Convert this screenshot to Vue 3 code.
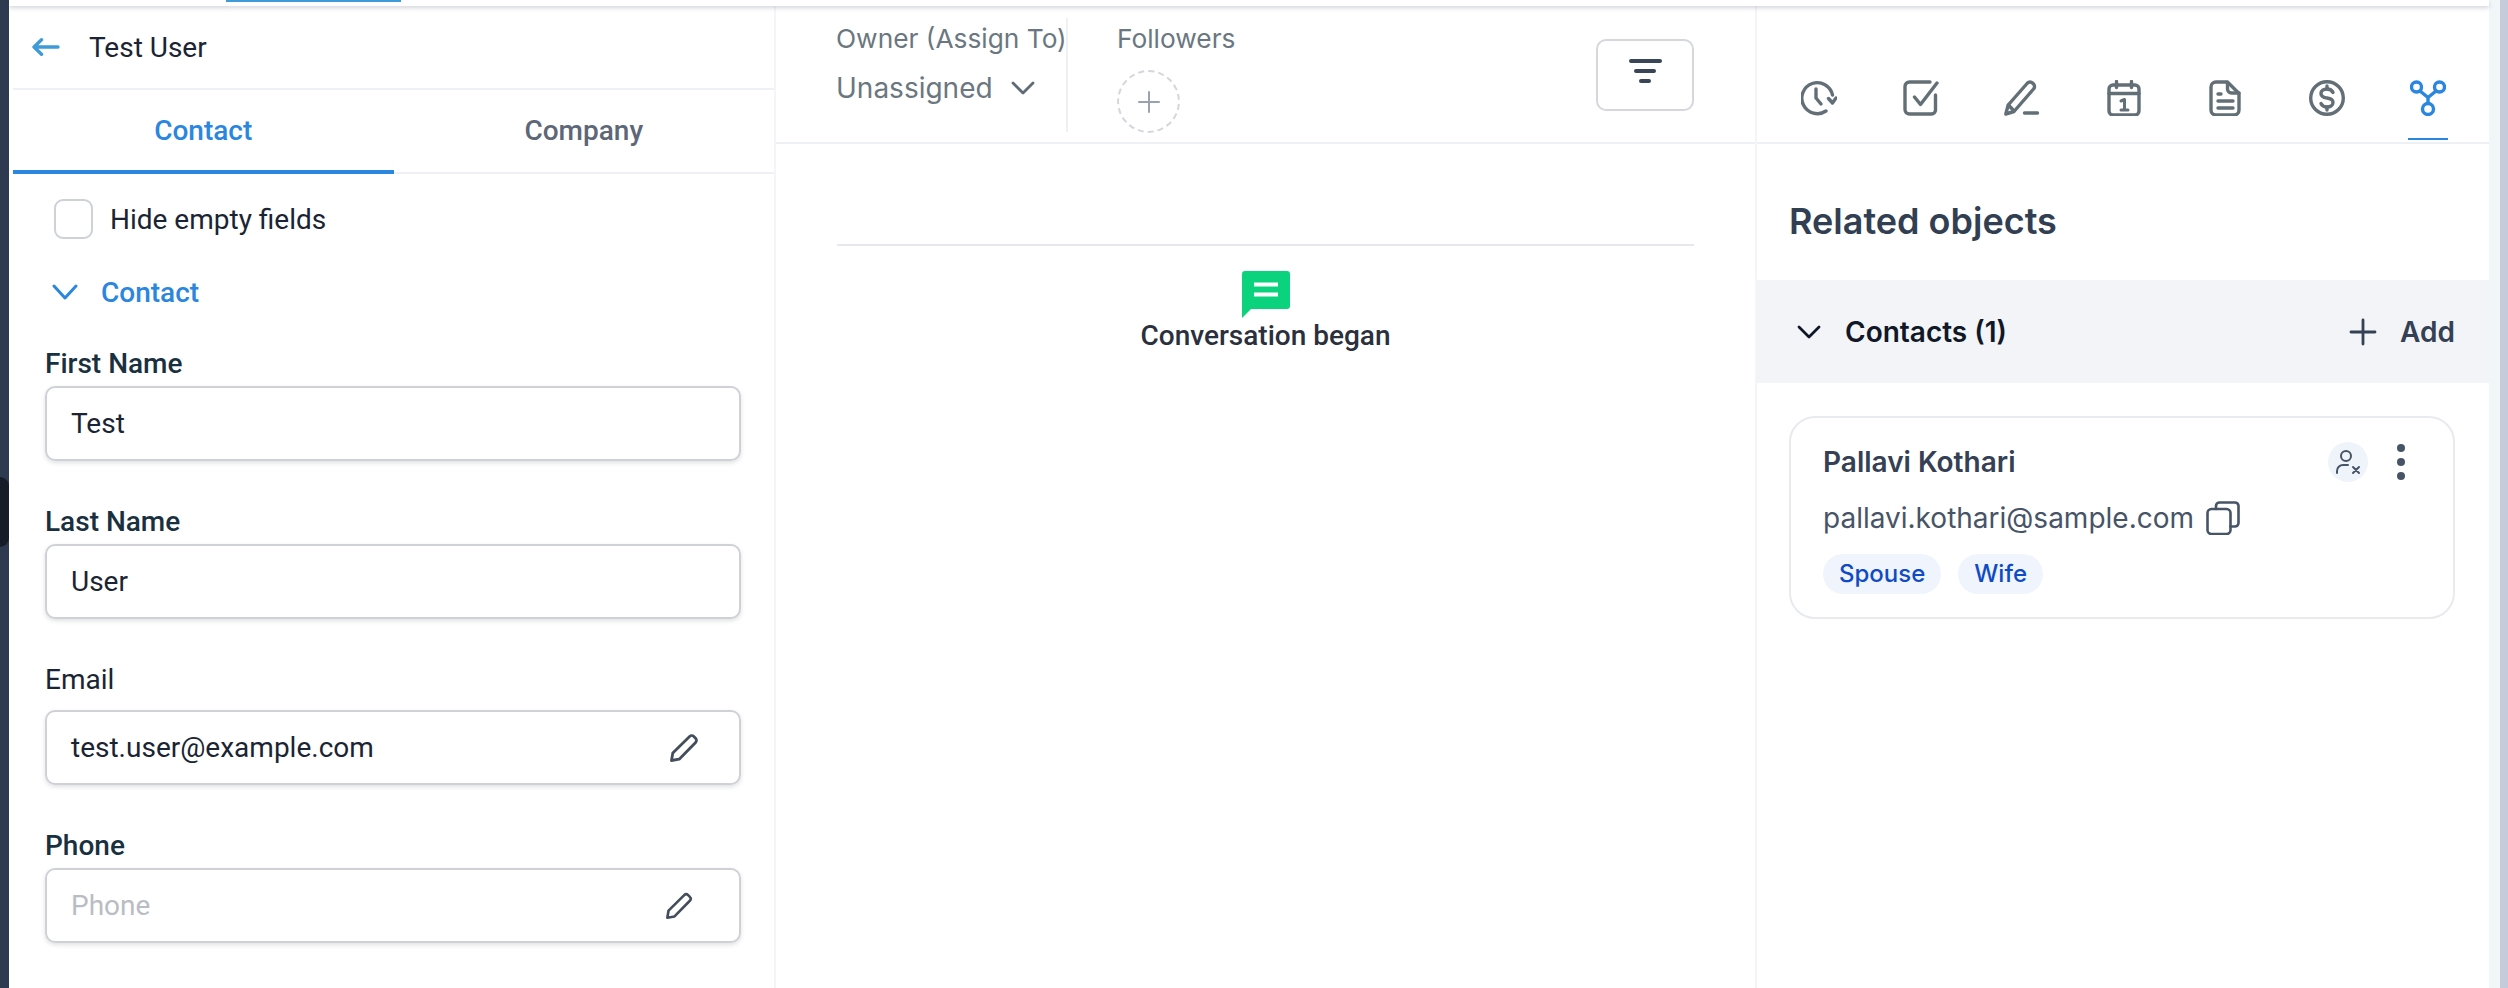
<script setup>
const fields = [
  { label: 'First Name', value: 'Test', strong: true },
  { label: 'Last Name', value: 'User', strong: true },
  { label: 'Email', value: 'test.user@example.com', edit: true, loose: true },
  { label: 'Phone', placeholder: 'Phone', edit: true, strong: true }
]
</script>

<template>
  <div class="page">
    <div class="edge"><span class="edge-blob"></span></div>

    <div class="shell">
      <div class="topbar"><span class="topbar-active"></span></div>

      <div class="panes">
        <!-- left: contact details -->
        <section class="left">
          <div class="back-row">
            <svg viewBox="0 0 28 18" width="28" height="18" fill="none" stroke="#3f9bd8" stroke-width="3.4" stroke-linecap="round" stroke-linejoin="round">
              <path d="M2 9h24M9.500 1.800 2 9l7.500 7.200" />
            </svg>
            <span>Test User</span>
          </div>

          <div class="tabs">
            <div class="tab active">Contact</div>
            <div class="tab">Company</div>
          </div>

          <div class="form">
            <label class="hide-empty"><span class="check"></span>Hide empty fields</label>
            <div class="group">
              <svg viewBox="0 0 26 16" width="26" height="16" fill="none" stroke="#2a86de" stroke-width="3" stroke-linecap="round" stroke-linejoin="round">
                <path d="M2 2l11 12L24 2" />
              </svg>
              <span>Contact</span>
            </div>

            <div v-for="f in fields" :key="f.label" class="field">
              <div class="field-label" :class="{ strong: f.strong, loose: f.loose }">{{ f.label }}</div>
              <div class="input" :class="{ empty: !f.value }">
                <span>{{ f.value || f.placeholder }}</span>
                <svg v-if="f.edit" class="pencil" viewBox="0 0 30 30" fill="none" stroke="#434d5c" stroke-width="2.800" stroke-linejoin="round" stroke-linecap="round">
                  <path d="M2.500 27.500l1.300-7.600L20.600 3.400a3 3 0 0 1 4.200 0l1.800 1.800a3 3 0 0 1 0 4.200L10.200 26.200 2.500 27.500z" />
                </svg>
              </div>
            </div>
          </div>
        </section>

        <!-- middle: conversation -->
        <section class="middle">
          <div class="mid-head">
            <div class="owner">
              <div class="head-label">Owner (Assign To)</div>
              <div class="owner-value">
                <span>Unassigned</span>
                <svg viewBox="0 0 24 14" width="24" height="14" fill="none" stroke="#5e6b76" stroke-width="2.800" stroke-linecap="round" stroke-linejoin="round">
                  <path d="M2 2l10 10L22 2" />
                </svg>
              </div>
            </div>
            <div class="followers">
              <div class="head-label">Followers</div>
              <div class="add-follower">
                <svg viewBox="0 0 22 22" width="22" height="22" stroke="#9aa1b2" stroke-width="2" stroke-linecap="round">
                  <path d="M11 1v20M1 11h20" />
                </svg>
              </div>
            </div>
            <button class="filter">
              <span class="bar b1"></span>
              <span class="bar b2"></span>
              <span class="bar b3"></span>
            </button>
          </div>

          <div class="timeline">
            <div class="event">
              <svg viewBox="0 0 48 47" width="48" height="47">
                <path d="M3 0h42a3 3 0 0 1 3 3v32a3 3 0 0 1-3 3H9L0 47V3a3 3 0 0 1 3-3z" fill="#0bd27c" />
                <path d="M12 11.500h24v4H12zM12 21.500h24v4H12z" fill="#fff" />
              </svg>
              <div class="event-text">Conversation began</div>
            </div>
          </div>
        </section>

        <!-- right: related objects -->
        <section class="right">
          <div class="icon-tabs">
            <div class="icon-tab">
              <svg viewBox="0 0 36 36" width="36" height="36" fill="none" stroke="#636f76" stroke-width="3.400" stroke-linecap="round" stroke-linejoin="round">
                <path d="M31.500 15A15.500 15.500 0 1 0 25 31" />
                <path d="M15 9v9l5 6" />
                <path d="M27.500 18.500l4 4.500 3.500-5" />
              </svg>
            </div>
            <div class="icon-tab">
              <svg viewBox="0 0 36 36" width="36" height="36" fill="none" stroke="#636f76" stroke-width="3.400" stroke-linecap="round" stroke-linejoin="round">
                <path d="M27 2H6.500A4.500 4.500 0 0 0 2 6.500v23A4.500 4.500 0 0 0 6.500 34h22a4 4 0 0 0 4-4V15" />
                <path d="M11.500 17l6 7.500L34 3" />
              </svg>
            </div>
            <div class="icon-tab">
              <svg viewBox="0 0 36 36" width="36" height="36" fill="none" stroke="#636f76" stroke-width="3.400" stroke-linecap="round" stroke-linejoin="round">
                <path d="M1.800 34l2.400-9L23.500 3a3.500 3.500 0 0 1 5 0l1 1a3.500 3.500 0 0 1 0 5L10 31.500 1.800 34z" />
                <path d="M4.500 25l5.500 6" />
                <path d="M20.500 33h13" />
              </svg>
            </div>
            <div class="icon-tab">
              <svg viewBox="0 0 36 36" width="36" height="36" fill="none" stroke="#636f76" stroke-width="3.400" stroke-linecap="round" stroke-linejoin="round">
                <rect x="3" y="5" width="30" height="30" rx="4" />
                <path d="M3 13.500h30M10.500 1.500v6M25.500 1.500v6" />
                <path d="M15 21l3.500-1.500V30M15 30h7" stroke-width="3" />
              </svg>
            </div>
            <div class="icon-tab">
              <svg viewBox="0 0 36 36" width="36" height="36" fill="none" stroke="#636f76" stroke-width="3.400" stroke-linecap="round" stroke-linejoin="round">
                <path d="M20.500 2H9A5 5 0 0 0 4 7v23a5 5 0 0 0 5 5h18a5 5 0 0 0 5-5V13.500L20.500 2z" />
                <path d="M20.500 2.500V9a4 4 0 0 0 4 4H32" />
                <path d="M11 14h3M11 21h15M11 28h15" />
              </svg>
            </div>
            <div class="icon-tab">
              <svg viewBox="0 0 36 36" width="36" height="36" fill="none" stroke="#636f76" stroke-width="3.400" stroke-linecap="round" stroke-linejoin="round">
                <circle cx="18" cy="18" r="16.300" />
                <path d="M24 12.500c-1-2.200-3.200-3.500-6-3.500-3.500 0-6 1.800-6 4.500s2.500 4 6 4.500 6 1.800 6 4.500-2.500 4.500-6 4.500c-2.800 0-5-1.300-6-3.500" />
                <path d="M18 6v3M18 27v3" />
              </svg>
            </div>
            <div class="icon-tab active">
              <svg viewBox="0 0 36 36" width="36" height="36" fill="none" stroke="#2a86de" stroke-width="3.400" stroke-linecap="round" stroke-linejoin="round">
                <circle cx="6.500" cy="7" r="5" />
                <circle cx="29.500" cy="7" r="5" />
                <circle cx="18" cy="29" r="5.500" />
                <path d="M10 11l8 6.500 8-6.500M18 17.500v6" />
              </svg>
            </div>
          </div>

          <h2 class="related-title">Related objects</h2>

          <div class="related-band">
            <svg viewBox="0 0 24 14" width="24" height="14" fill="none" stroke="#101828" stroke-width="2.800" stroke-linecap="round" stroke-linejoin="round">
              <path d="M2 2l10 10L22 2" />
            </svg>
            <span class="band-title">Contacts (1)</span>
            <svg class="band-plus" viewBox="0 0 28 28" width="28" height="28" stroke="#344054" stroke-width="2.800" stroke-linecap="round">
              <path d="M14 2v24M2 14h24" />
            </svg>
            <span class="band-add">Add</span>
          </div>

          <div class="card">
            <div class="card-top">
              <span class="card-name">Pallavi Kothari</span>
              <span class="unlink">
                <svg viewBox="0 0 26 26" width="26" height="26" fill="none" stroke="#475467" stroke-width="2" stroke-linecap="round">
                  <circle cx="11" cy="7" r="5" />
                  <path d="M2 24v-2a6 6 0 0 1 6-6h5" />
                  <path d="M18 18l6 6M24 18l-6 6" />
                </svg>
              </span>
              <span class="kebab"><i></i><i></i><i></i></span>
            </div>
            <div class="card-mail">
              <span>pallavi.kothari@sample.com</span>
              <svg viewBox="0 0 34 34" width="34" height="34" fill="none" stroke="#475467" stroke-width="2.600" stroke-linejoin="round" stroke-linecap="round">
                <rect x="1.500" y="8" width="23" height="25" rx="4" />
                <path d="M10 8V5a3.500 3.500 0 0 1 3.500-3.500h15.500A3.500 3.500 0 0 1 32.500 5v17a3.500 3.500 0 0 1-3.500 3.500h-4.500" />
              </svg>
            </div>
            <div class="chips">
              <span class="chip">Spouse</span>
              <span class="chip">Wife</span>
            </div>
          </div>
        </section>
      </div>
    </div>

    <div class="gutter"></div>
    <div class="scroll"></div>
  </div>
</template>

<style>
html, body {
  margin: 0;
  background: #fff;
  overflow: hidden;
}
</style>

<style scoped>
* {
  box-sizing: border-box;
}

.page {
  display: flex;
  width: 2508px;
  height: 988px;
  overflow: hidden;
  font-family: Roboto, "Liberation Sans", sans-serif;
  background: #fff;
}

.edge {
  position: relative;
  flex: 0 0 9px;
  background: #2d3a4f;
}

.edge-blob {
  position: absolute;
  left: 0;
  top: 477px;
  width: 9px;
  height: 70px;
  background: #171d28;
  border-radius: 0 10px 10px 0;
}

.gutter {
  flex: 0 0 11px;
  background: #f1f7f9;
}

.scroll {
  flex: 0 0 8px;
  background: #c5cbd8;
}

.shell {
  flex: 1;
  min-width: 0;
  display: flex;
  flex-direction: column;
}

.topbar {
  position: relative;
  z-index: 2;
  height: 6px;
  padding-left: 217px;
  background: #fff;
  box-shadow: 0 2px 4px rgba(60, 70, 90, 0.22);
}

.topbar-active {
  display: block;
  width: 175px;
  height: 2px;
  background: #3f9bd8;
}

.panes {
  flex: 1;
  display: flex;
  min-height: 0;
}

/* left */
.left {
  flex: 0 0 767px;
  padding-left: 4px;
  border-right: 2px solid #f4f5f7;
}

.back-row {
  display: flex;
  align-items: center;
  gap: 29px;
  height: 84px;
  padding-left: 19px;
  border-bottom: 2px solid #eef0f3;
  font-size: 28px;
  color: #1a2433;
}

.tabs {
  display: flex;
  height: 84px;
  border-bottom: 2px solid #eef0f3;
}

.tab {
  flex: 1;
  display: flex;
  align-items: center;
  justify-content: center;
  margin-bottom: -2px;
  border-bottom: 4px solid transparent;
  font-size: 28px;
  font-weight: 500;
  color: #5d6778;
}

.tab.active {
  color: #2a86de;
  border-bottom-color: #2a86de;
}

.form {
  padding: 25px 32px 0;
}

.hide-empty {
  display: flex;
  align-items: center;
  gap: 17px;
  height: 40px;
  padding-left: 9px;
  font-size: 28px;
  color: #1a2433;
}

.check {
  width: 39px;
  height: 40px;
  border: 2px solid #ced1d6;
  border-radius: 9px;
}

.group {
  display: flex;
  align-items: center;
  gap: 23px;
  height: 40px;
  margin-top: 33px;
  padding-left: 7px;
  font-size: 28px;
  font-weight: 500;
  color: #2a86de;
}

.field {
  margin-bottom: 39px;
}

.group + .field {
  margin-top: 30px;
}

.field-label {
  height: 44px;
  line-height: 44px;
  font-size: 28px;
  color: #1a2433;
}

.field-label.strong {
  font-weight: 500;
  color: #19303f;
}

.field-label.loose {
  height: 52px;
}

.input {
  display: flex;
  align-items: center;
  justify-content: space-between;
  width: 696px;
  height: 75px;
  padding: 0 24px;
  border: 2px solid #cfd1d7;
  border-radius: 10px;
  box-shadow: 0 2px 4px rgba(60, 70, 90, 0.16);
  font-size: 28px;
  color: #1a2433;
}

.input.empty {
  color: #b9bdc3;
}

.pencil {
  width: 30px;
  height: 30px;
  margin-right: 16px;
}

.field:last-child .pencil {
  width: 28px;
  height: 28px;
  margin-right: 22px;
}

/* middle */
.middle {
  flex: 0 0 981px;
  border-right: 2px solid #f4f5f7;
}

.mid-head {
  display: flex;
  align-items: flex-start;
  height: 138px;
  padding-left: 60px;
  border-bottom: 2px solid #eef0f3;
  font-family: Inter, Roboto, sans-serif;
  font-size: 26.300px;
  color: #6b7780;
}

.owner {
  width: 232px;
  height: 114px;
  margin-top: 12px;
  border-right: 2px solid #eef0f3;
}

.head-label {
  height: 42px;
  line-height: 42px;
  white-space: nowrap;
}

.owner-value {
  display: flex;
  align-items: center;
  gap: 18px;
  height: 56px;
  font-size: 28px;
}

.followers {
  margin: 12px 0 0 49px;
}

.add-follower {
  display: flex;
  align-items: center;
  justify-content: center;
  width: 63px;
  height: 63px;
  margin-top: 10px;
  border: 2px dashed #d4d6dc;
  border-radius: 50%;
}

.filter {
  display: flex;
  flex-direction: column;
  align-items: center;
  justify-content: center;
  gap: 6px;
  width: 98px;
  height: 72px;
  margin: 33px 61px 0 auto;
  padding: 0 0 8px;
  background: #fff;
  border: 2px solid #d5d7dc;
  border-radius: 10px;
}

.bar {
  display: block;
  height: 4px;
  border-radius: 2px;
  background: #3a4557;
}

.b1 { width: 33px; }
.b2 { width: 22px; }
.b3 { width: 12px; }

.timeline {
  margin: 100px 61px 0;
  padding-top: 25px;
  border-top: 2px solid #e6e8ec;
}

.event {
  display: flex;
  flex-direction: column;
  align-items: center;
}

.event-text {
  margin-top: 1px;
  font-size: 28px;
  font-weight: 500;
  color: #2a303c;
}

/* right */
.right {
  flex: 1;
  min-width: 0;
  font-family: Inter, Roboto, sans-serif;
}

.icon-tabs {
  display: flex;
  gap: 61.500px;
  align-items: flex-start;
  height: 138px;
  padding: 74px 0 0 42px;
  border-bottom: 2px solid #eef0f3;
}

.icon-tab {
  display: flex;
  justify-content: center;
  width: 40px;
  height: 60px;
}

.icon-tab.active {
  border-bottom: 2px solid #2a86de;
}

.related-title {
  height: 79px;
  margin: 57px 0 0 32px;
  font-size: 36px;
  font-weight: 600;
  line-height: 40px;
  color: #323f52;
}

.related-band {
  display: flex;
  align-items: center;
  height: 103px;
  padding: 0 34px 0 40px;
  background: #f2f4f7;
}

.band-title {
  margin-left: 24px;
  font-size: 28px;
  font-weight: 600;
  color: #101828;
}

.band-plus {
  margin-left: auto;
}

.band-add {
  margin-left: 23px;
  font-size: 28px;
  font-weight: 600;
  color: #344054;
}

.card {
  width: 666px;
  height: 203px;
  margin: 33px 0 0 32px;
  padding: 24px 32px 0;
  border: 2px solid #e9eaee;
  border-radius: 26px;
}

.card-top {
  display: flex;
  align-items: center;
  height: 40px;
}

.card-name {
  font-size: 28px;
  font-weight: 600;
  color: #344054;
}

.unlink {
  display: flex;
  align-items: center;
  justify-content: center;
  width: 40px;
  height: 40px;
  margin-left: auto;
  border-radius: 50%;
  background: #eff4fb;
}

.kebab {
  display: flex;
  flex-direction: column;
  gap: 6px;
  margin: 0 16px 0 29px;
}

.kebab i {
  display: block;
  width: 8px;
  height: 8px;
  border-radius: 50%;
  background: #475467;
}

.card-mail {
  display: flex;
  align-items: center;
  gap: 12px;
  height: 40px;
  margin-top: 16px;
  font-size: 28px;
  color: #475467;
}

.chips {
  display: flex;
  gap: 17px;
  margin-top: 16px;
}

.chip {
  height: 40px;
  padding: 0 16px;
  line-height: 40px;
  border-radius: 20px;
  background: #eff4fd;
  font-size: 24px;
  font-weight: 500;
  color: #0f4bc4;
}
</style>
